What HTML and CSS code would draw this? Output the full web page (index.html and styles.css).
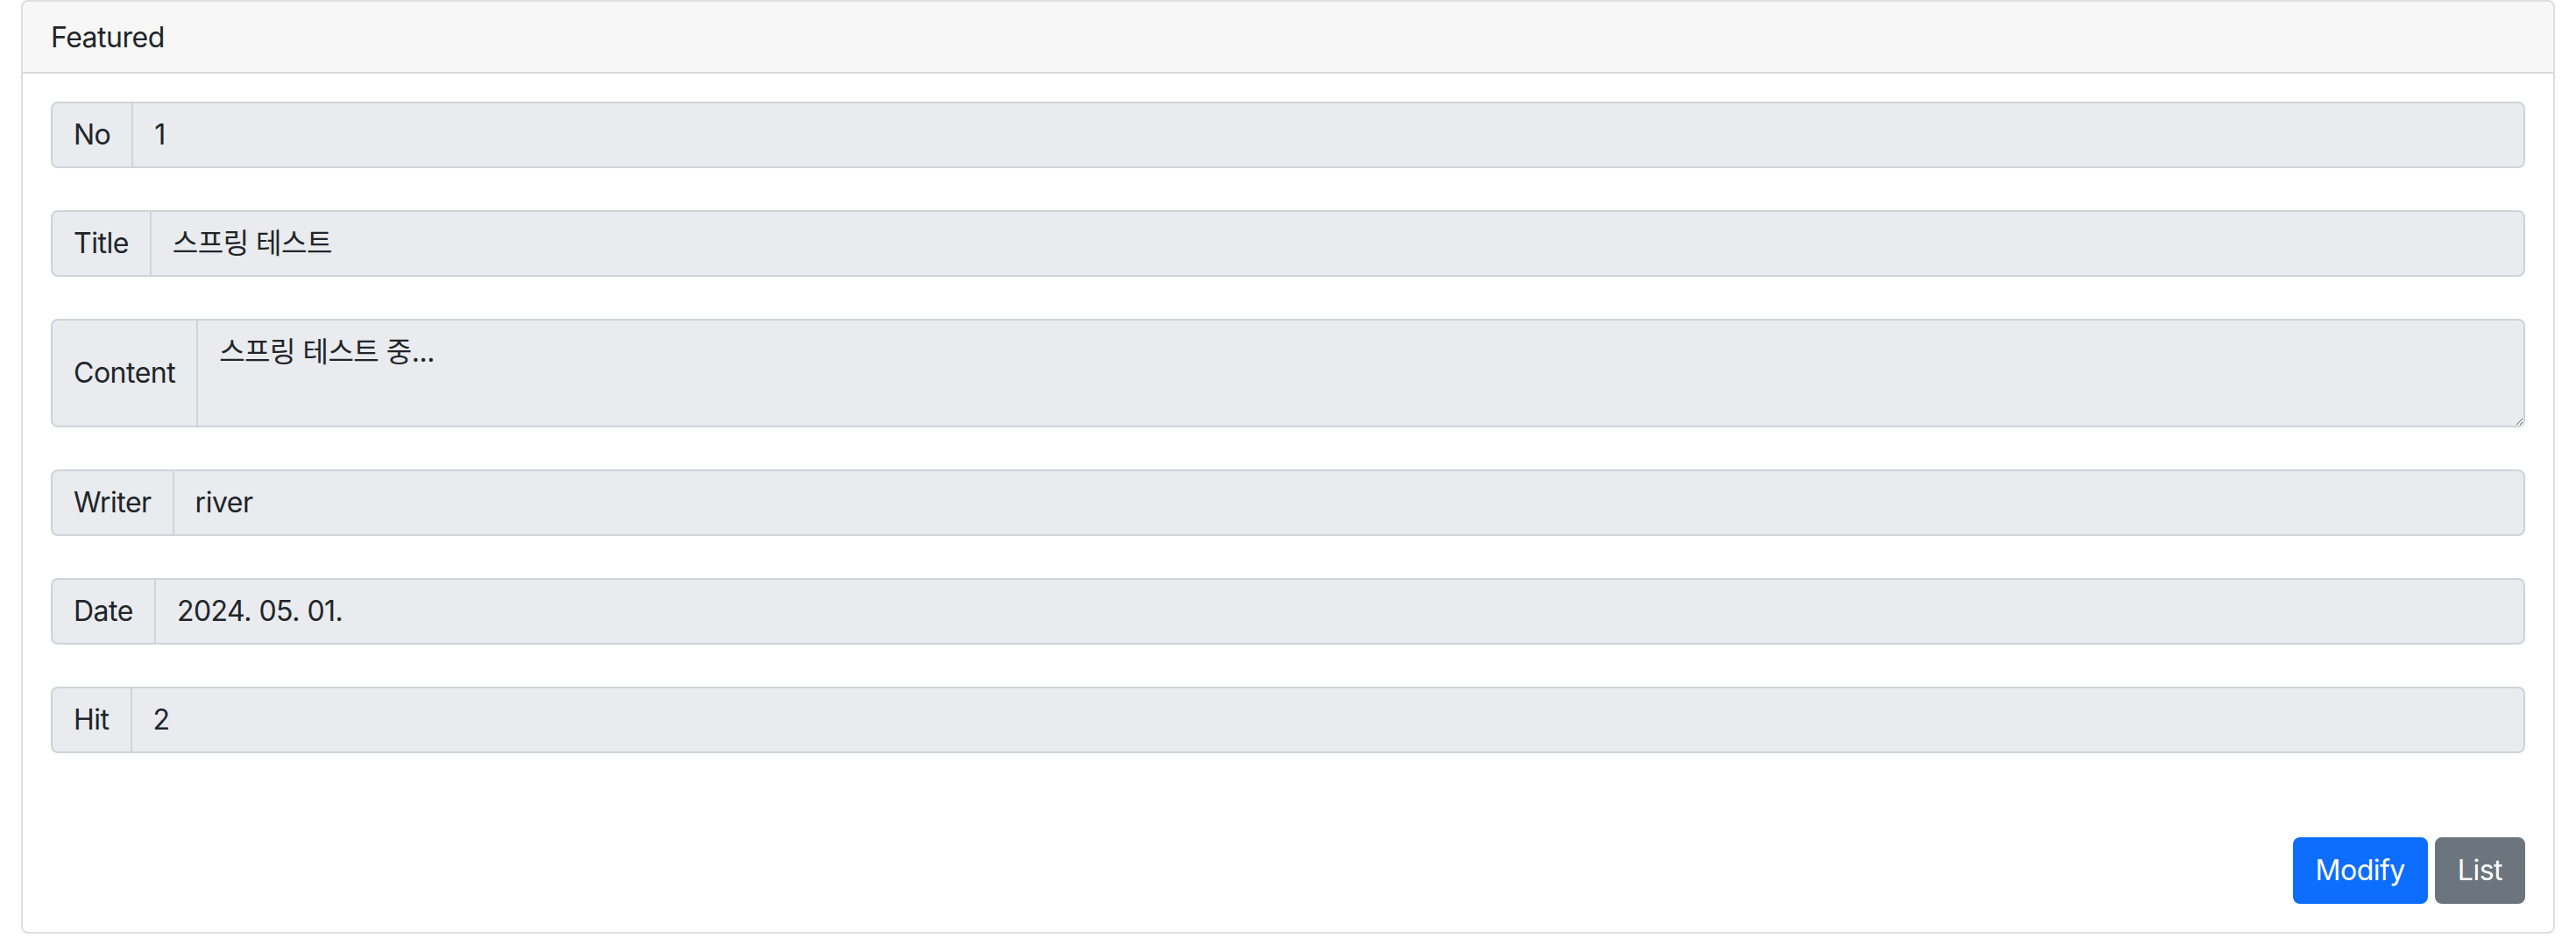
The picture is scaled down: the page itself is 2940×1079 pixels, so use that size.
FILE: index.html
```html
<!DOCTYPE html>
<html lang="ko">
<head>
<meta charset="utf-8">
<title>Board Read</title>
<link rel="stylesheet" href="styles.css">
</head>
<body>
<div class="container">
  <div class="card">
    <div class="card-header">Featured</div>
    <div class="card-body">
      <div class="input-group">
        <span class="input-group-text">No</span>
        <input class="form-control" type="text" value="1" readonly>
      </div>
      <div class="input-group">
        <span class="input-group-text">Title</span>
        <input class="form-control" type="text" value="스프링 테스트" readonly>
      </div>
      <div class="input-group">
        <span class="input-group-text">Content</span>
        <textarea class="form-control" rows="2" readonly>스프링 테스트 중...</textarea>
      </div>
      <div class="input-group">
        <span class="input-group-text">Writer</span>
        <input class="form-control" type="text" value="river" readonly>
      </div>
      <div class="input-group">
        <span class="input-group-text">Date</span>
        <input class="form-control" type="text" value="2024. 05. 01." readonly>
      </div>
      <div class="input-group">
        <span class="input-group-text">Hit</span>
        <input class="form-control" type="text" value="2" readonly>
      </div>
      <div class="actions">
        <button class="btn btn-primary" type="button">Modify</button>
        <button class="btn btn-secondary" type="button">List</button>
      </div>
    </div>
  </div>
</div>
</body>
</html>
```

FILE: styles.css
```css
* { box-sizing: border-box; }

html, body {
  margin: 0;
  background: #fff;
}

body {
  font-family: "Inter", "Noto Sans CJK KR", sans-serif;
  font-size: 32px;
  line-height: 48px;
  letter-spacing: -0.5px;
  color: #212529;
}

.container {
  padding: 0 24px;
}

.card {
  border: 2px solid rgba(0, 0, 0, 0.125);
  border-radius: 8px;
  background: #fff;
}

.card-header {
  padding: 17px 32px 15px;
  background: rgba(0, 0, 0, 0.03);
  border-bottom: 2px solid rgba(0, 0, 0, 0.125);
  border-radius: 6px 6px 0 0;
}

.card-body {
  padding: 32px;
}

.input-group {
  display: flex;
  align-items: stretch;
  margin-bottom: 48px;
}

.input-group-text {
  display: flex;
  align-items: center;
  padding: 12px 24px;
  background: #e9ebef;
  border: 2px solid #ced4da;
  border-radius: 8px 0 0 8px;
  white-space: nowrap;
}

.form-control {
  flex: 1 1 auto;
  min-width: 0;
  margin: 0 0 0 -2px;
  padding: 12px 24px;
  font: inherit;
  letter-spacing: inherit;
  color: #212529;
  background: #e9ebef;
  border: 2px solid #ced4da;
  border-radius: 0 8px 8px 0;
  outline: none;
}

textarea.form-control {
  resize: vertical;
  height: 124px;
}

.actions {
  padding-top: 48px;
  display: flex;
  justify-content: flex-end;
  gap: 8px;
}

.btn {
  font: inherit;
  letter-spacing: inherit;
  color: #fff;
  padding: 12px 24px;
  border: 2px solid transparent;
  border-radius: 8px;
  cursor: pointer;
}

.btn-primary {
  background: #0d6efd;
  border-color: #0d6efd;
}

.btn-secondary {
  background: #6c757d;
  border-color: #6c757d;
}
```
